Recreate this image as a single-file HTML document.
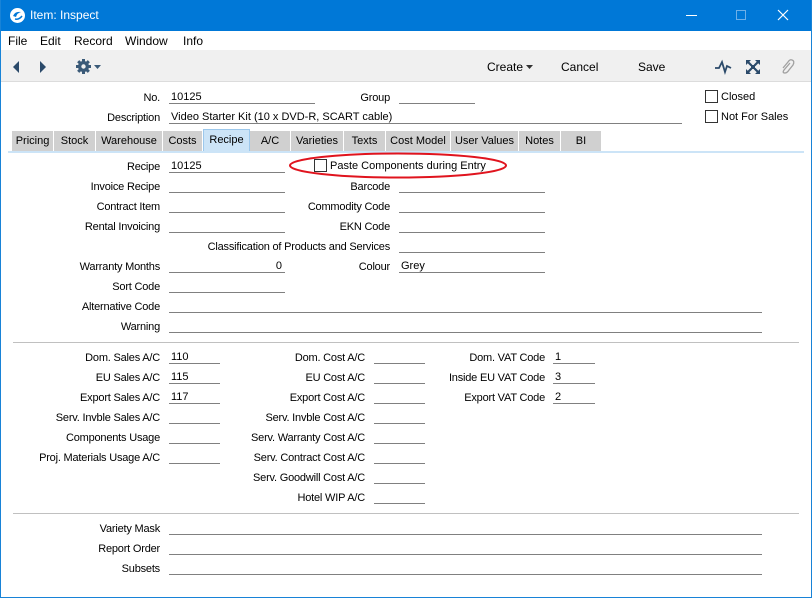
<!DOCTYPE html>
<html><head><meta charset="utf-8"><style>
*{margin:0;padding:0;box-sizing:border-box}
body{width:812px;height:598px;overflow:hidden;background:#fff;font-family:"Liberation Sans",sans-serif;font-size:11px;color:#000;position:relative}
.win{position:absolute;left:0;top:0;width:812px;height:598px;border:1px solid #1883d7;border-top:none}
.tb{position:absolute;left:0;top:0;width:812px;height:31px;background:#0078d7;color:#fff;font-size:12px}
.abs{position:absolute;white-space:nowrap}
.l{position:absolute;width:260px;text-align:right;height:14px;line-height:16px;white-space:nowrap;letter-spacing:-0.2px}
.f{position:absolute;height:14px;line-height:15px;border-bottom:1px solid #808080;padding-left:2px;white-space:nowrap}
.tab{position:absolute;top:131px;height:20px;line-height:21px;background:#d0d0d0;text-align:center;border-right:1px solid #fff}
.cb{position:absolute;width:13px;height:13px;border:1px solid #333;background:#fff}
.sep{position:absolute;height:1px;background:#c0c0c0}
</style></head><body>
<div class="tb">
 <svg class="abs" style="left:9px;top:7px" width="17" height="17" viewBox="0 0 17 17"><circle cx="8.5" cy="8.5" r="7.5" fill="#fff"/><path d="M4 9 Q6 4 12 5 Q8 6 7 10 Z" fill="#0078d7"/><path d="M6 12 Q10 13 13 9" stroke="#0078d7" stroke-width="1.5" fill="none"/></svg>
 <div class="abs" style="left:30px;top:8px">Item: Inspect</div>
 <div class="abs" style="left:686px;top:15px;width:11px;height:1px;background:#fff"></div>
 <div class="abs" style="left:736px;top:10px;width:10px;height:10px;border:1px solid #6fb0e8"></div>
 <svg class="abs" style="left:777px;top:9px" width="12" height="12"><path d="M1 1L11 11M11 1L1 11" stroke="#fff" stroke-width="1.2"/></svg>
</div>
<div class="abs" style="left:1px;top:31px;width:810px;height:19px;background:#fff"></div>
<div class="abs" style="left:8px;top:34px;font-size:12px">File</div>
<div class="abs" style="left:40px;top:34px;font-size:12px">Edit</div>
<div class="abs" style="left:74px;top:34px;font-size:12px">Record</div>
<div class="abs" style="left:125px;top:34px;font-size:12px">Window</div>
<div class="abs" style="left:183px;top:34px;font-size:12px">Info</div>
<div class="abs" style="left:1px;top:50px;width:810px;height:32px;background:#f0f0f0;border-bottom:1px solid #dcdcdc"></div>
<svg class="abs" style="left:10px;top:60px" width="40" height="14"><path d="M9 1L3 7L9 13Z" fill="#2b4a6a"/><path d="M30 1L36 7L30 13Z" fill="#2b4a6a"/></svg>
<svg class="abs" style="left:75px;top:58px" width="30" height="17" viewBox="0 0 30 17"><g fill="#3a5a78"><circle cx="8.5" cy="8.5" r="5.5"/><rect x="7" y="1" width="3" height="15"/><rect x="1" y="7" width="15" height="3"/><rect x="7" y="1" width="3" height="15" transform="rotate(45 8.5 8.5)"/><rect x="7" y="1" width="3" height="15" transform="rotate(-45 8.5 8.5)"/></g><circle cx="8.5" cy="8.5" r="2.2" fill="#f0f0f0"/><path d="M19 7h7l-3.5 4z" fill="#3a5a78"/></svg>
<div class="abs" style="left:487px;top:60px;font-size:12px">Create</div>
<svg class="abs" style="left:525px;top:64px" width="10" height="6"><path d="M1 1h7l-3.5 4z" fill="#333"/></svg>
<div class="abs" style="left:561px;top:60px;font-size:12px">Cancel</div>
<div class="abs" style="left:638px;top:60px;font-size:12px">Save</div>
<svg class="abs" style="left:714px;top:59px" width="18" height="16"><path d="M1 9L5 9L8 3L11 13L13 7L17 9" stroke="#2b4a6a" stroke-width="1.8" fill="none"/></svg>
<svg class="abs" style="left:745px;top:59px" width="16" height="16"><g fill="#2b4a6a"><path d="M1 1h5L1 6zM15 1v5L10 1zM1 15v-5L6 15zM15 15h-5L15 10z"/></g><path d="M3 3L6.5 6.5M13 3L9.5 6.5M3 13L6.5 9.5M13 13L9.5 9.5" stroke="#2b4a6a" stroke-width="2.2"/><rect x="6" y="6" width="4" height="4" fill="#2b4a6a"/></svg>
<svg class="abs" style="left:779px;top:58px" width="16" height="18"><path d="M11 5L5 12Q3 15 6 15Q8 15 10 12L14 7Q16 3 13 2Q11 1 9 4L4 10" stroke="#a0a0a0" stroke-width="1.3" fill="none"/></svg>

<div class="l" style="left:-100px;top:90px">No.</div>
<div class="f" style="left:169px;top:90px;width:146px">10125</div>
<div class="l" style="left:130px;top:90px">Group</div>
<div class="f" style="left:399px;top:90px;width:76px"></div>
<div class="l" style="left:-100px;top:110px">Description</div>
<div class="f" style="left:169px;top:110px;width:513px">Video Starter Kit (10 x DVD-R, SCART cable)</div>
<div class="cb" style="left:705px;top:90px"></div><div class="abs" style="left:721px;top:91px">Closed</div>
<div class="cb" style="left:705px;top:110px"></div><div class="abs" style="left:721px;top:111px">Not For Sales</div>

<div class="tab" style="left:12px;width:42px">Pricing</div>
<div class="tab" style="left:54px;width:42px">Stock</div>
<div class="tab" style="left:96px;width:67px">Warehouse</div>
<div class="tab" style="left:163px;width:40px">Costs</div>
<div class="tab" style="left:203px;top:129px;height:22px;width:47px;background:#cce4f7;border:1px solid #9cc8ec;border-bottom:none;line-height:20px">Recipe</div>
<div class="tab" style="left:250px;width:41px">A/C</div>
<div class="tab" style="left:291px;width:53px">Varieties</div>
<div class="tab" style="left:344px;width:42px">Texts</div>
<div class="tab" style="left:386px;width:65px">Cost Model</div>
<div class="tab" style="left:451px;width:68px">User Values</div>
<div class="tab" style="left:519px;width:42px">Notes</div>
<div class="tab" style="left:561px;width:41px">BI</div>
<div class="abs" style="left:8px;top:151px;width:796px;height:2px;background:#cce4f7"></div>

<div class="l" style="left:-100px;top:159px">Recipe</div><div class="f" style="left:169px;top:159px;width:116px">10125</div>
<div class="l" style="left:-100px;top:179px">Invoice Recipe</div><div class="f" style="left:169px;top:179px;width:116px"></div>
<div class="l" style="left:-100px;top:199px">Contract Item</div><div class="f" style="left:169px;top:199px;width:116px"></div>
<div class="l" style="left:-100px;top:219px">Rental Invoicing</div><div class="f" style="left:169px;top:219px;width:116px"></div>
<div class="l" style="left:130px;top:239px">Classification of Products and Services</div>
<div class="l" style="left:-100px;top:259px">Warranty Months</div><div class="f" style="left:169px;top:259px;width:116px;text-align:right;padding-right:3px">0</div>
<div class="l" style="left:-100px;top:279px">Sort Code</div><div class="f" style="left:169px;top:279px;width:116px"></div>
<div class="l" style="left:-100px;top:299px">Alternative Code</div><div class="f" style="left:169px;top:299px;width:593px"></div>
<div class="l" style="left:-100px;top:319px">Warning</div><div class="f" style="left:169px;top:319px;width:593px"></div>

<div class="cb" style="left:314px;top:159px"></div><div class="abs" style="left:330px;top:160px">Paste Components during Entry</div>
<svg class="abs" style="left:287px;top:151px" width="222" height="30"><ellipse cx="111" cy="14.5" rx="108" ry="12" stroke="#e0141e" stroke-width="2" fill="none"/></svg>
<div class="l" style="left:130px;top:179px">Barcode</div><div class="f" style="left:399px;top:179px;width:146px"></div>
<div class="l" style="left:130px;top:199px">Commodity Code</div><div class="f" style="left:399px;top:199px;width:146px"></div>
<div class="l" style="left:130px;top:219px">EKN Code</div><div class="f" style="left:399px;top:219px;width:146px"></div>
<div class="f" style="left:399px;top:239px;width:146px"></div>
<div class="l" style="left:130px;top:259px">Colour</div><div class="f" style="left:399px;top:259px;width:146px">Grey</div>

<div class="sep" style="left:13px;top:342px;width:786px"></div>

<div class="l" style="left:-100px;top:350px">Dom. Sales A/C</div><div class="f" style="left:169px;top:350px;width:51px">110</div>
<div class="l" style="left:-100px;top:370px">EU Sales A/C</div><div class="f" style="left:169px;top:370px;width:51px">115</div>
<div class="l" style="left:-100px;top:390px">Export Sales A/C</div><div class="f" style="left:169px;top:390px;width:51px">117</div>
<div class="l" style="left:-100px;top:410px">Serv. Invble Sales A/C</div><div class="f" style="left:169px;top:410px;width:51px"></div>
<div class="l" style="left:-100px;top:430px">Components Usage</div><div class="f" style="left:169px;top:430px;width:51px"></div>
<div class="l" style="left:-100px;top:450px">Proj. Materials Usage A/C</div><div class="f" style="left:169px;top:450px;width:51px"></div>

<div class="l" style="left:105px;top:350px">Dom. Cost A/C</div><div class="f" style="left:374px;top:350px;width:51px"></div>
<div class="l" style="left:105px;top:370px">EU Cost A/C</div><div class="f" style="left:374px;top:370px;width:51px"></div>
<div class="l" style="left:105px;top:390px">Export Cost A/C</div><div class="f" style="left:374px;top:390px;width:51px"></div>
<div class="l" style="left:105px;top:410px">Serv. Invble Cost A/C</div><div class="f" style="left:374px;top:410px;width:51px"></div>
<div class="l" style="left:105px;top:430px">Serv. Warranty Cost A/C</div><div class="f" style="left:374px;top:430px;width:51px"></div>
<div class="l" style="left:105px;top:450px">Serv. Contract Cost A/C</div><div class="f" style="left:374px;top:450px;width:51px"></div>
<div class="l" style="left:105px;top:470px">Serv. Goodwill Cost A/C</div><div class="f" style="left:374px;top:470px;width:51px"></div>
<div class="l" style="left:105px;top:490px">Hotel WIP A/C</div><div class="f" style="left:374px;top:490px;width:51px"></div>

<div class="l" style="left:285px;top:350px">Dom. VAT Code</div><div class="f" style="left:553px;top:350px;width:42px">1</div>
<div class="l" style="left:285px;top:370px">Inside EU VAT Code</div><div class="f" style="left:553px;top:370px;width:42px">3</div>
<div class="l" style="left:285px;top:390px">Export VAT Code</div><div class="f" style="left:553px;top:390px;width:42px">2</div>

<div class="sep" style="left:13px;top:513px;width:786px"></div>

<div class="l" style="left:-100px;top:521px">Variety Mask</div><div class="f" style="left:169px;top:521px;width:593px"></div>
<div class="l" style="left:-100px;top:541px">Report Order</div><div class="f" style="left:169px;top:541px;width:593px"></div>
<div class="l" style="left:-100px;top:561px">Subsets</div><div class="f" style="left:169px;top:561px;width:593px"></div>

<div class="win"></div>
</body></html>
